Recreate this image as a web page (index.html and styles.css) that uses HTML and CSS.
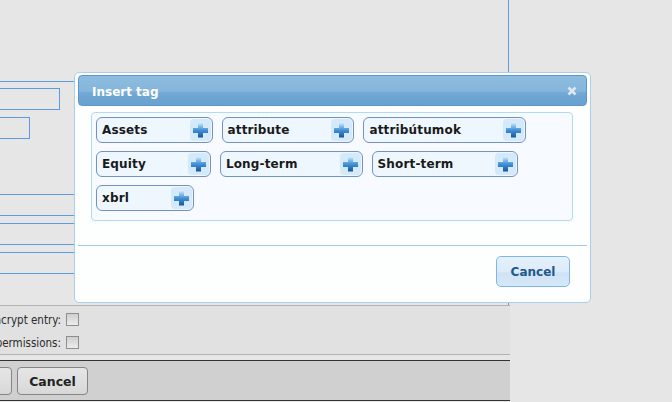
FILE: index.html
```html
<!DOCTYPE html>
<html lang="en">

<head>
    <meta charset="UTF-8">
    <title>Insert tag</title>
    <link rel="stylesheet" href="styles.css">
</head>

<body>

    <div class="page">

        <div class="form">
            <div class="top"></div>
            <div class="input wide"></div>
            <div class="input narrow"></div>
            <div class="input row first"></div>
            <div class="input row"></div>
            <div class="input row"></div>
        </div>

        <div class="options">
            <div class="option">
                <span class="label">Encrypt entry:</span>
                <span class="check"></span>
            </div>
            <div class="option">
                <span class="label">Set permissions:</span>
                <span class="check"></span>
            </div>
        </div>

        <div class="buttons">
            <button class="btn hidden-left"></button>
            <button class="btn">Cancel</button>
        </div>

    </div>

    <div class="dialog">
        <div class="titlebar">
            <span class="title">Insert tag</span>
            <svg class="close" width="10" height="10" viewBox="0 0 10 10">
                <path d="M1.5 1.5 L8.5 8.5 M8.5 1.5 L1.5 8.5" stroke="#dfe8f1" stroke-width="2.6" />
            </svg>
        </div>

        <div class="tags">
            <div class="tag"><span>Assets</span><i class="add"></i></div>
            <div class="tag"><span>attribute</span><i class="add"></i></div>
            <div class="tag"><span>attribútumok</span><i class="add"></i></div>
            <div class="tag"><span>Equity</span><i class="add"></i></div>
            <div class="tag"><span>Long-term</span><i class="add"></i></div>
            <div class="tag"><span>Short-term</span><i class="add"></i></div>
            <div class="tag"><span>xbrl</span><i class="add"></i></div>
        </div>

        <div class="footer">
            <button class="cancel">Cancel</button>
        </div>
    </div>

    <template id="plus">
        <svg width="21" height="22" viewBox="0 0 21 22">
            <defs>
                <linearGradient id="pg" x1="0" y1="0" x2="0" y2="1">
                    <stop offset="0" stop-color="#dcefff" />
                    <stop offset="0.28" stop-color="#7ab8ea" />
                    <stop offset="0.5" stop-color="#4592d8" />
                    <stop offset="1" stop-color="#17569a" />
                </linearGradient>
            </defs>
            <path d="M8 3.5 H13 V9 H18 V14 H13 V18.5 H8 V14 H3 V9 H8 Z" fill="url(#pg)" />
        </svg>
    </template>

    <script>
        document.querySelectorAll(".add").forEach(icon => {
            const klon = document.querySelector("#plus").content.cloneNode(true);
            icon.appendChild(klon);
        });
    </script>
</body></html>
```

FILE: styles.css
```css
* {
    margin: 0px;
    padding: 0px;
    box-sizing: border-box;
}

body {
    width: 672px;
    height: 402px;
    overflow: hidden;
    background: #e6e6e6;
    font-family: "DejaVu Sans", Verdana, sans-serif;
    position: relative;
}

.page {
    width: 510px;
}

/* background form */

.form {
    width: 509px;
    border-right: 1px solid #5b9be0;
    height: 305px;
}

.top {
    height: 82px;
    border-bottom: 1px solid #5b9be0;
}

.input {
    height: 22px;
    border: 1px solid #5b9be0;
    margin-top: 7px;
}

.wide {
    margin-top: 6px;
    margin-left: -100px;
    width: 160px;
}

.narrow {
    margin-left: -100px;
    width: 130px;
}

.row {
    margin-left: -10px;
    width: 500px;
}

.row.first {
    margin-top: 55px;
}

.options {
    height: 50px;
    border-top: 1px solid #b2b2b2;
    border-bottom: 1px solid #b2b2b2;
    background: #e1e1e1;
    padding-top: 7px;
}

.option {
    display: flex;
    align-items: center;
    height: 23px;
    padding-bottom: 10px;
}

.label {
    width: 61px;
    display: flex;
    justify-content: flex-end;
    white-space: nowrap;
    overflow: hidden;
    font-family: "DejaVu Sans Condensed", "Liberation Sans", sans-serif;
    font-size: 11.5px;
    color: #2b2b2b;
}

.check {
    width: 13px;
    height: 13px;
    margin-left: 5px;
    border: 1px solid #8e8e8e;
    background: linear-gradient(#cfcfcf, #ececec);
}

.buttons {
    margin-top: 5px;
    height: 41px;
    border-top: 1px solid #333;
    border-bottom: 1px solid #333;
    background: #d0d0d0;
    padding-top: 6px;
    display: flex;
}

.btn {
    height: 28px;
    width: 71px;
    border: 1px solid #858585;
    border-radius: 4px;
    background: linear-gradient(#e6e6e6, #d8d8d8);
    font-family: "DejaVu Sans", Verdana, sans-serif;
    font-weight: bold;
    font-size: 12.5px;
    color: #222;
    margin-left: 5px;
}

.hidden-left {
    margin-left: -49px;
    width: 61px;
}

/* dialog */

.dialog {
    position: absolute;
    left: 74px;
    top: 72px;
    width: 517px;
    height: 231px;
    border: 1px solid #a9cfec;
    border-radius: 5px;
    background: #fdfefe;
    padding: 2px 3px 0 3px;
}

.titlebar {
    height: 31px;
    border: 1px solid #5d97c9;
    border-radius: 4px;
    background: linear-gradient(#8fbde0, #85b5dc 52%, #72a9d4 58%, #67a1cf);
    display: flex;
    justify-content: space-between;
    align-items: center;
    padding: 0 9px 0 13px;
}

.title {
    color: #fff;
    font-weight: bold;
    font-size: 12px;
    line-height: 28px;
    padding-top: 2px;
}

.close {
    margin-top: 1px;
}

.tags {
    margin: 6px 14px 0 13px;
    height: 109px;
    border: 1px solid #afdaf8;
    border-radius: 4px;
    background: #f7fbff;
    padding: 4px 0 0 4px;
    display: flex;
    flex-wrap: wrap;
    align-content: flex-start;
    gap: 8px 9px;
}

.tag {
    display: flex;
    align-items: center;
    height: 26px;
    border: 1px solid #7392c2;
    border-radius: 6px;
    background: #eef6fe;
    padding: 1px 1px 1px 5px;
}

.tag span {
    font-weight: bold;
    font-size: 12px;
    letter-spacing: 0.15px;
    color: #1a1a1a;
    line-height: 22px;
    margin-right: 42px;
}

.add {
    display: block;
    width: 21px;
    height: 22px;
    border-radius: 4px;
    background: #d4e9fa;
}

.add svg {
    display: block;
}

.footer {
    margin-top: 24px;
    border-top: 1px solid #a6c8e2;
    display: flex;
    justify-content: flex-end;
    padding: 10px 17px 0 0;
}

.cancel {
    width: 74px;
    height: 31px;
    border: 1px solid #7cb7e8;
    border-radius: 5px;
    background: linear-gradient(#e5f1fb, #dbebf8 50%, #cfe3f5 55%, #d6e8f7);
    font-family: "DejaVu Sans", Verdana, sans-serif;
    font-weight: bold;
    font-size: 12px;
    color: #22588c;
}
```
